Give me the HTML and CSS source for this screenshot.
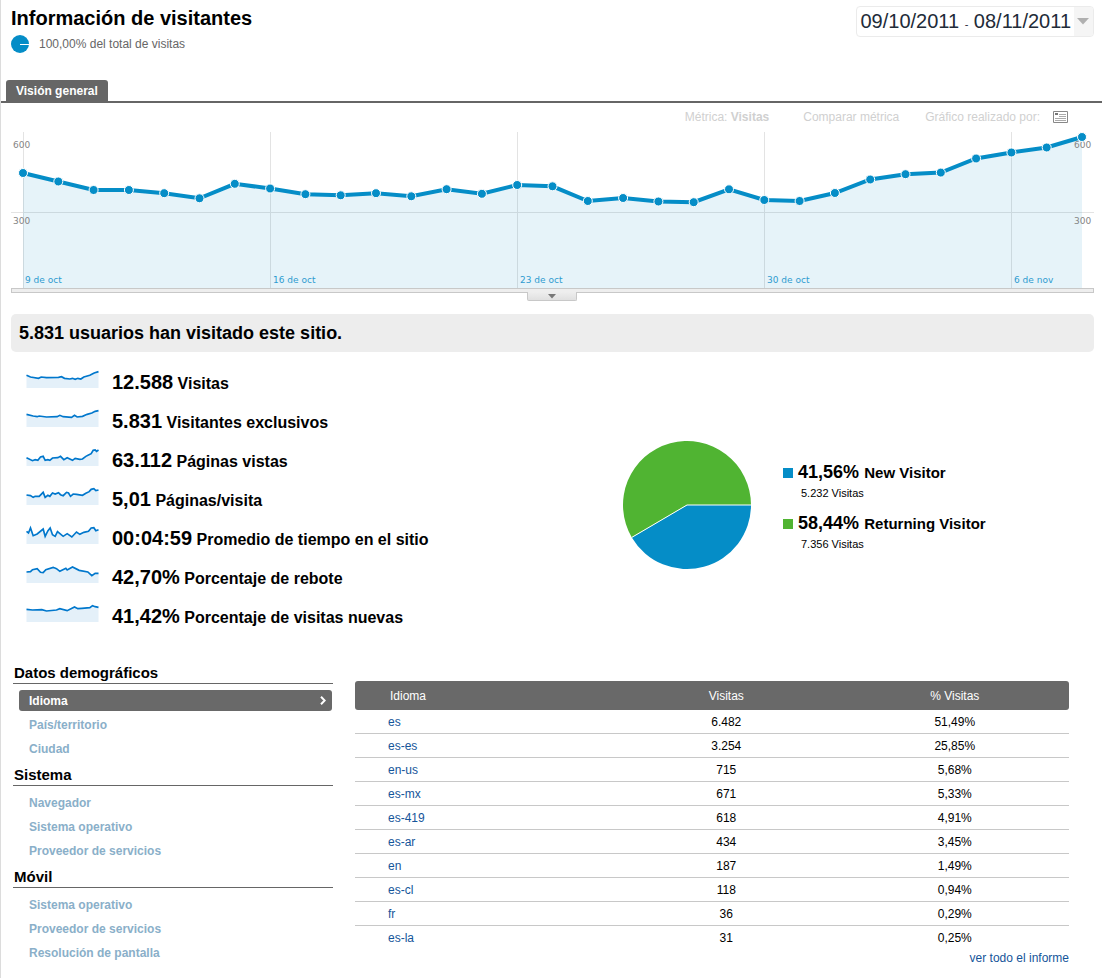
FILE: index.html
```html
<!DOCTYPE html>
<html lang="es">
<head>
<meta charset="utf-8">
<title>Información de visitantes</title>
<link rel="stylesheet" href="styles.css">
</head>
<body>
<main class="report">
  <header class="report-header">
    <div class="heading">
      <h1 class="title">Información de visitantes</h1>
      <p class="segment">
        <svg class="segment-icon" width="18" height="18" viewBox="0 0 18 18" aria-hidden="true"><circle cx="9" cy="9" r="9"/><path d="M9 9.500H18"/></svg>
        <span>100,00% del total de visitas</span>
      </p>
    </div>
    <button class="date-range" type="button">
      <span class="dates">09/10/2011 <small>-</small> 08/11/2011</span>
      <span class="date-arrow"><svg width="12" height="7" viewBox="0 0 12 7" aria-hidden="true"><path d="M0 0H12L6 6.500Z"/></svg></span>
    </button>
  </header>

  <nav class="tabs"><button class="tab" type="button">Visión general</button></nav>

  <section class="graph">
    <div class="graph-tools">
      <button class="tool" type="button">Métrica: <b>Visitas</b></button>
      <button class="tool tool-compare" type="button">Comparar métrica</button>
      <span class="graph-by">Gráfico realizado por:
        <button class="tool tool-icon" type="button" aria-label="Día">
          <svg width="15" height="12" viewBox="0 0 15 12" aria-hidden="true"><path class="frame" d="M.5.5h14v11H.5z"/><path class="lines" d="M6 3.500h7M6 5.500h7M2 7.500h11M2 9.500h11"/><path class="block" d="M2 2h3v2H2z"/></svg>
        </button>
      </span>
    </div>
    <svg class="chart" viewBox="0 0 1083 157" role="img" aria-label="Visitas por día">
      <defs>
        <marker id="dot" markerUnits="userSpaceOnUse" markerWidth="12" markerHeight="12" refX="6" refY="6"><circle class="dot" cx="6" cy="6" r="4.500"/></marker>
      </defs>
      <path class="grid" d="M12.500 1V157M259.500 1V157M506.500 1V157M753.500 1V157M1000.500 1V157M0 81.500H1083"/>
      <path class="area" d="M12 157L12 42 47.300 50.500 82.600 59 117.900 59 153.200 62.200 188.500 67.300 223.800 52.800 259.100 57.500 294.400 63.200 329.700 64.300 365 62.200 400.300 65.300 435.600 58.200 470.900 62.800 506.200 54 541.500 55.300 576.800 70 612.100 67 647.400 70.500 682.700 71.200 718 58.300 753.300 69 788.600 70 823.900 62 859.200 48.500 894.500 43.200 929.800 41.600 965.100 27.500 1000.400 21.500 1035.700 16.500 1071 6V157Z"/>
      <text class="scale" x="2" y="17">600</text>
      <text class="scale" x="2" y="93">300</text>
      <text class="scale" x="1063" y="17">600</text>
      <text class="scale" x="1063" y="93">300</text>
      <text class="day" x="14" y="152">9 de oct</text>
      <text class="day" x="262" y="152">16 de oct</text>
      <text class="day" x="509" y="152">23 de oct</text>
      <text class="day" x="756" y="152">30 de oct</text>
      <text class="day" x="1003" y="152">6 de nov</text>
      <polyline class="series" points="12,42 47.300,50.500 82.600,59 117.900,59 153.200,62.200 188.500,67.300 223.800,52.800 259.100,57.500 294.400,63.200 329.700,64.300 365,62.200 400.300,65.300 435.600,58.200 470.900,62.800 506.200,54 541.500,55.300 576.800,70 612.100,67 647.400,70.500 682.700,71.200 718,58.300 753.300,69 788.600,70 823.900,62 859.200,48.500 894.500,43.200 929.800,41.600 965.100,27.500 1000.400,21.500 1035.700,16.500 1071,6"/>
    </svg>
    <div class="slider"><button class="slider-handle" type="button" aria-label="Anotaciones"><svg width="8" height="5" viewBox="0 0 8 5" aria-hidden="true"><path d="M0 0H8L4 4.500Z"/></svg></button></div>
  </section>

  <h2 class="banner">5.831 usuarios han visitado este sitio.</h2>

  <section class="summary">
    <ul class="metrics">
      <li class="metric"><svg class="spark" viewBox="0 0 216 60" aria-hidden="true"><path d="M0 60V22L12 27 36 31 44 27 60 29 96 28 105 26 114 31 130 33 138 31 146 34 154 31 163 33 172 27 190 22 203 15 216 11V60Z"/><polyline points="0,22 12,27 36,31 44,27 60,29 96,28 105,26 114,31 130,33 138,31 146,34 154,31 163,33 172,27 190,22 203,15 216,11"/></svg><span class="metric-text"><strong>12.588</strong> Visitas</span></li>
      <li class="metric"><svg class="spark" viewBox="0 0 216 60" aria-hidden="true"><path d="M0 60V22L20 27 32 29 38 27 60 30 92 29 100 25 110 29 135 31 144 25 152 30 168 28 182 22 196 18 206 13 216 11V60Z"/><polyline points="0,22 20,27 32,29 38,27 60,30 92,29 100,25 110,29 135,31 144,25 152,30 168,28 182,22 196,18 206,13 216,11"/></svg><span class="metric-text"><strong>5.831</strong> Visitantes exclusivos</span></li>
      <li class="metric"><svg class="spark" viewBox="0 0 216 60" aria-hidden="true"><path d="M0 60V35L18 44 26 41 34 43 42 33 50 31 56 43 64 41 70 43 78 36 94 35 102 31 112 41 122 35 130 39 138 43 146 37 160 40 168 39 178 31 186 27 194 23 200 13 206 12 210 16 216 12V60Z"/><polyline points="0,35 18,44 26,41 34,43 42,33 50,31 56,43 64,41 70,43 78,36 94,35 102,31 112,41 122,35 130,39 138,43 146,37 160,40 168,39 178,31 186,27 194,23 200,13 206,12 210,16 216,12"/></svg><span class="metric-text"><strong>63.112</strong> Páginas vistas</span></li>
      <li class="metric"><svg class="spark" viewBox="0 0 216 60" aria-hidden="true"><path d="M0 60V30L12 32 20 37 26 34 38 34 50 22 56 37 64 31 70 34 78 24 86 27 96 23 102 29 110 32 120 22 126 24 132 34 140 27 150 28 168 31 178 25 188 20 194 13 202 11 208 17 216 15V60Z"/><polyline points="0,30 12,32 20,37 26,34 38,34 50,22 56,37 64,31 70,34 78,24 86,27 96,23 102,29 110,32 120,22 126,24 132,34 140,27 150,28 168,31 178,25 188,20 194,13 202,11 208,17 216,15"/></svg><span class="metric-text"><strong>5,01</strong> Páginas/visita</span></li>
      <li class="metric"><svg class="spark" viewBox="0 0 216 60" aria-hidden="true"><path d="M0 60V22L6 27 12 12 20 35 32 30 50 15 56 37 64 21 71 12 78 32 86 37 93 23 110 37 122 29 136 39 150 24 160 31 172 25 186 22 194 12 202 11 208 20 216 17V60Z"/><polyline points="0,22 6,27 12,12 20,35 32,30 50,15 56,37 64,21 71,12 78,32 86,37 93,23 110,37 122,29 136,39 150,24 160,31 172,25 186,22 194,12 202,11 208,20 216,17"/></svg><span class="metric-text"><strong>00:04:59</strong> Promedio de tiempo en el sitio</span></li>
      <li class="metric"><svg class="spark" viewBox="0 0 216 60" aria-hidden="true"><path d="M0 60V27L12 26 18 20 32 17 42 28 50 29 58 20 80 13 90 17 100 25 118 16 122 21 138 12 158 22 184 27 196 38 206 31 216 31V60Z"/><polyline points="0,27 12,26 18,20 32,17 42,28 50,29 58,20 80,13 90,17 100,25 118,16 122,21 138,12 158,22 184,27 196,38 206,31 216,31"/></svg><span class="metric-text"><strong>42,70%</strong> Porcentaje de rebote</span></li>
      <li class="metric"><svg class="spark" viewBox="0 0 216 60" aria-hidden="true"><path d="M0 60V22L18 24 46 23 60 27 90 24 100 20 122 26 144 15 154 20 166 19 190 17 198 11 206 14 216 16V60Z"/><polyline points="0,22 18,24 46,23 60,27 90,24 100,20 122,26 144,15 154,20 166,19 190,17 198,11 206,14 216,16"/></svg><span class="metric-text"><strong>41,42%</strong> Porcentaje de visitas nuevas</span></li>
    </ul>
    <div class="visitors">
      <svg class="pie" width="130" height="130" viewBox="-65 -65 130 130" role="img" aria-label="Visitantes nuevos y recurrentes">
        <path class="fill-new" d="M0 0H64A64 64 0 0 1 -55.200 32.400Z"/>
        <path class="fill-returning" d="M0 0L-55.200 32.400A64 64 0 1 1 64 0Z"/>
        <path class="cut" d="M64 0H0L-55.200 32.400"/>
      </svg>
      <ul class="legend">
        <li class="legend-item"><span class="swatch swatch-new"></span><div><p class="legend-label"><strong>41,56%</strong> New Visitor</p><p class="legend-count">5.232 Visitas</p></div></li>
        <li class="legend-item"><span class="swatch swatch-returning"></span><div><p class="legend-label"><strong>58,44%</strong> Returning Visitor</p><p class="legend-count">7.356 Visitas</p></div></li>
      </ul>
    </div>
  </section>

  <section class="details">
    <nav class="menu">
      <h3 class="menu-title">Datos demográficos</h3>
      <ul class="menu-list">
        <li><a class="menu-link active" href="#idioma">Idioma<svg width="6" height="9" viewBox="0 0 6 9" aria-hidden="true"><path d="M1 .8L4.700 4.500 1 8.200"/></svg></a></li>
        <li><a class="menu-link" href="#pais">País/territorio</a></li>
        <li><a class="menu-link" href="#ciudad">Ciudad</a></li>
      </ul>
      <h3 class="menu-title">Sistema</h3>
      <ul class="menu-list">
        <li><a class="menu-link" href="#navegador">Navegador</a></li>
        <li><a class="menu-link" href="#so">Sistema operativo</a></li>
        <li><a class="menu-link" href="#proveedor">Proveedor de servicios</a></li>
      </ul>
      <h3 class="menu-title">Móvil</h3>
      <ul class="menu-list">
        <li><a class="menu-link" href="#movil-so">Sistema operativo</a></li>
        <li><a class="menu-link" href="#movil-proveedor">Proveedor de servicios</a></li>
        <li><a class="menu-link" href="#resolucion">Resolución de pantalla</a></li>
      </ul>
    </nav>
    <div class="data">
      <table class="table">
        <thead><tr><th class="col-name" scope="col">Idioma</th><th scope="col">Visitas</th><th scope="col">% Visitas</th></tr></thead>
        <tbody>
          <tr><td><a href="#es">es</a></td><td>6.482</td><td>51,49%</td></tr>
          <tr><td><a href="#es-es">es-es</a></td><td>3.254</td><td>25,85%</td></tr>
          <tr><td><a href="#en-us">en-us</a></td><td>715</td><td>5,68%</td></tr>
          <tr><td><a href="#es-mx">es-mx</a></td><td>671</td><td>5,33%</td></tr>
          <tr><td><a href="#es-419">es-419</a></td><td>618</td><td>4,91%</td></tr>
          <tr><td><a href="#es-ar">es-ar</a></td><td>434</td><td>3,45%</td></tr>
          <tr><td><a href="#en">en</a></td><td>187</td><td>1,49%</td></tr>
          <tr><td><a href="#es-cl">es-cl</a></td><td>118</td><td>0,94%</td></tr>
          <tr><td><a href="#fr">fr</a></td><td>36</td><td>0,29%</td></tr>
          <tr><td><a href="#es-la">es-la</a></td><td>31</td><td>0,25%</td></tr>
        </tbody>
      </table>
      <a class="full-report" href="#informe">ver todo el informe</a>
    </div>
  </section>
</main>
</body>
</html>
```
FILE: styles.css
```css
* { box-sizing: border-box; }

body {
  margin: 0;
  background: #fff;
  color: #000;
  font: 12px/16px "Liberation Sans", Arial, sans-serif;
}

h1, h2, h3, p, ul { margin: 0; padding: 0; }
ul { list-style: none; }
a { color: #15559a; text-decoration: none; }
svg { display: block; }
button {
  margin: 0;
  padding: 0;
  border: 0;
  background: none;
  color: inherit;
  font: inherit;
  cursor: pointer;
}

.report {
  min-height: 100vh;
  border-left: 1px solid #dcdcdc;
}

/* Header */
.report-header {
  display: flex;
  justify-content: space-between;
  align-items: flex-start;
  padding: 6px 8px 0 10px;
  height: 80px;
}
.title { font-size: 20px; line-height: 24px; }
.segment {
  display: flex;
  align-items: center;
  gap: 10px;
  margin-top: 5px;
  color: #666;
}
.segment-icon { fill: #058dc7; stroke: none; }
.segment-icon path { stroke: #fff; }
.date-range {
  display: flex;
  height: 31px;
  border: 1px solid #ebebeb;
  border-radius: 4px;
  color: #222b38;
  overflow: hidden;
}
.dates { padding: 0 3px; font-size: 20px; line-height: 29px; }
.dates small { font-size: 11px; }
.date-arrow {
  display: flex;
  align-items: center;
  align-self: stretch;
  padding: 0 4px 0 3px;
  background: #f5f5f5;
  fill: #b0b0b0;
}

.tabs { padding-left: 5px; border-bottom: 2px solid #666; }
.tab {
  display: block;
  height: 21px;
  padding: 0 10px;
  border-radius: 3px 3px 0 0;
  background: #666;
  color: #fff;
  font-weight: bold;
}

/* Daily graph */
.graph { padding: 0 8px 0 10px; }
.graph-tools {
  display: flex;
  justify-content: flex-end;
  align-items: center;
  height: 28px;
  padding-right: 26px;
  color: #d0d0d0;
}
.tool-compare { margin: 0 26px 0 34px; }
.graph-by { display: flex; align-items: center; gap: 13px; }
.tool-icon svg { fill: none; stroke: #888; }
.tool-icon .lines { stroke: #aaa; }
.tool-icon .block { fill: #777; stroke: none; }
.chart { width: 100%; height: auto; overflow: visible; }
.grid { stroke: #e3e3e3; fill: none; }
.area { fill: #058dc7; fill-opacity: .1; }
.scale, .day { font: 9px "DejaVu Sans", Verdana, sans-serif; }
.scale { fill: #858585; }
.day { fill: #2e9bd0; }
.series {
  fill: none;
  stroke: #058dc7;
  stroke-width: 4;
  marker-start: url(#dot);
  marker-mid: url(#dot);
  marker-end: url(#dot);
}
.dot { fill: #058dc7; stroke: #fff; stroke-width: 1; }
.slider {
  position: relative;
  height: 5px;
  border: 1px solid #c8c8c8;
  background: #eee;
}
.slider-handle {
  position: absolute;
  top: 3px;
  left: 50%;
  display: flex;
  justify-content: center;
  width: 50px;
  height: 9px;
  margin-left: -26px;
  padding-top: 2px;
  border: 1px solid #c8c8c8;
  border-top: 0;
  border-radius: 0 0 2px 2px;
  background: linear-gradient(#eee, #e0e0e0);
  fill: #777;
}

/* Summary */
.banner {
  margin: 21px 8px 0 10px;
  padding: 0 8px;
  border-radius: 5px;
  background: #ededed;
  font-size: 18px;
  line-height: 38px;
}
.summary { display: flex; padding: 10px 8px 0 25px; }
.metrics { flex: 0 0 586px; }
.metric { display: flex; gap: 13px; height: 39px; padding-top: 6px; }
.spark { width: 73px; height: 20px; }
.spark path { fill: #e4f0f9; }
.spark polyline { fill: none; stroke: #0077cc; stroke-width: 5; }
.metric-text { padding-top: 1px; font-size: 16px; font-weight: bold; line-height: 26px; }
.metric-text strong { font-size: 20px; }
.visitors { display: flex; align-items: center; gap: 31px; padding-top: 13px; }
.pie { flex: none; margin-left: 10px; }
.fill-new { fill: #058dc7; }
.fill-returning { fill: #50b432; }
.cut { fill: none; stroke: #fff; }
.legend { padding-top: 12px; }
.legend-item { display: flex; gap: 5px; height: 51px; }
.swatch { flex: none; width: 10px; height: 10px; margin-top: 8px; }
.swatch-new { background: #058dc7; }
.swatch-returning { background: #50b432; }
.legend-label { font-size: 15px; font-weight: bold; line-height: 24px; }
.legend-label strong { margin-right: 1px; font-size: 18px; }
.legend-count { padding-left: 3px; font-size: 11px; }

/* Details */
.details { display: flex; gap: 22px; padding: 24px 33px 0 12px; }
.menu { flex: 0 0 320px; }
.menu-title {
  padding: 4px 0 0 1px;
  border-bottom: 1px solid #666;
  font-size: 15px;
  line-height: 20px;
}
.menu-list { padding: 5px 1px 0 6px; }
.menu-list li { height: 24px; padding-top: 1px; }
.menu-link {
  display: flex;
  align-items: center;
  justify-content: space-between;
  height: 21px;
  padding: 0 6px 0 10px;
  border-radius: 3px;
  color: #8aafc9;
  font-weight: bold;
}
.menu-link.active { background: #696969; color: #fff; }
.menu-link svg { fill: none; stroke: #fff; stroke-width: 2; }
.data { flex: 1; padding-top: 22px; }
.table {
  width: 100%;
  border-spacing: 0;
  table-layout: fixed;
  text-align: center;
}
.table th {
  height: 29px;
  padding: 0;
  background: #696969;
  color: #fff;
  font-weight: normal;
}
.table th:first-child { padding-left: 35px; border-radius: 3px 0 0 3px; text-align: left; }
.table th:last-child { border-radius: 0 3px 3px 0; }
.col-name { width: 36%; }
.table td { height: 24px; padding: 0; border-bottom: 1px solid #c8c8c8; }
.table td:first-child { padding-left: 33px; text-align: left; }
.table tr:last-child td { border-bottom: 0; }
.full-report { display: block; text-align: right; }
```
